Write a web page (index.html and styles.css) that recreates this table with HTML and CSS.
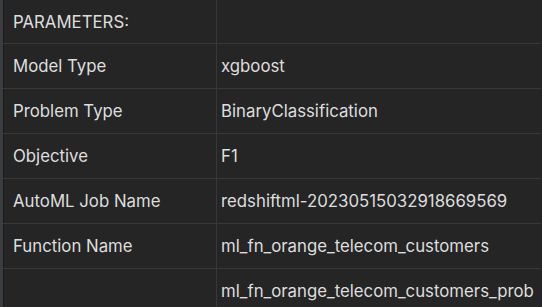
FILE: index.html
```html
<!DOCTYPE html>
<html>
    <head>
        <meta charset="UTF-8">
        <title>Model Parameters</title>
        <link rel="stylesheet" href="styles.css">
    </head>
    <body>
        <div class="panel">
            <table class="params">
                <tr class="head">
                    <td class="key">PARAMETERS:</td>
                    <td class="val"></td>
                </tr>
                <tr>
                    <td class="key">Model Type</td>
                    <td class="val">xgboost</td>
                </tr>
                <tr>
                    <td class="key">Problem Type</td>
                    <td class="val">BinaryClassification</td>
                </tr>
                <tr>
                    <td class="key">Objective</td>
                    <td class="val">F1</td>
                </tr>
                <tr>
                    <td class="key">AutoML Job Name</td>
                    <td class="val">redshiftml-20230515032918669569</td>
                </tr>
                <tr>
                    <td class="key">Function Name</td>
                    <td class="val">ml_fn_orange_telecom_customers</td>
                </tr>
                <tr>
                    <td class="key"></td>
                    <td class="val">ml_fn_orange_telecom_customers_prob</td>
                </tr>
            </table>
        </div>
    </body>
</html>
```

FILE: styles.css
```css
body{
    margin:0;
    background-color:#252525;
    font-family: 'Inter', 'Liberation Sans', sans-serif;
    color:#dedede;
    overflow:hidden;
}

.panel{
    border-left:#3b3e41 solid 3px;
    height:307px;
}

.params{
    border-collapse:collapse;
    border-left:#1a1a1a solid 1px;
    width:538px;
    font-size:16.8px;
}

.params td{
    height:44px;
    padding:0;
    border-bottom:#383838 solid 1px;
    white-space:nowrap;
}

.params .head td{
    height:43px;
}

.key{
    width:203px;
    padding-left:9px !important;
    border-right:#383838 solid 1px;
}

.val{
    padding-left:4px !important;
}
```
